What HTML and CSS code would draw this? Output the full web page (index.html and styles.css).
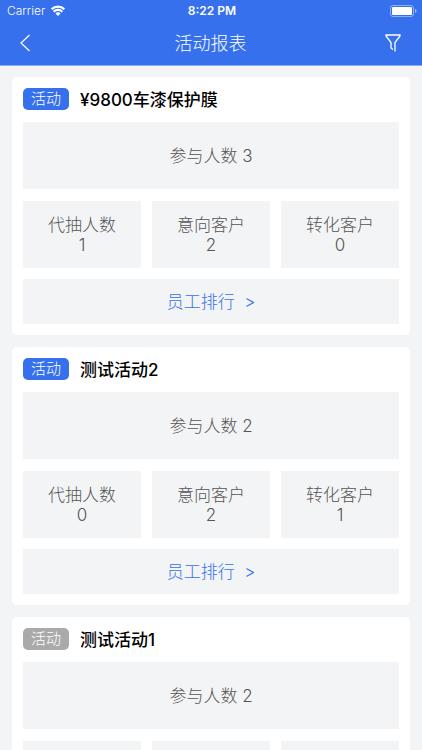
FILE: index.html
```html
<!DOCTYPE html>
<html lang="zh-CN">

<head>
    <meta charset="UTF-8">
    <meta name="viewport" content="width=device-width, initial-scale=1.0">
    <title>活动报表</title>
    <link rel="stylesheet" href="styles.css">
</head>

<body>
    <header class="header">
        <div class="status-bar">
            <div class="carrier">
                <span>Carrier</span>
                <svg class="wifi" width="14" height="11" viewBox="0 0 14 11" fill="none" stroke="#fff" stroke-width="2.2" aria-hidden="true">
                    <path d="M0.7 4.1a9 9 0 0 1 12.6 0" />
                    <path d="M2.7 6.700a6.100 6.100 0 0 1 8.600 0" />
                    <path d="M7 11L4.500 8.500a3.500 3.500 0 0 1 5 0z" fill="#fff" stroke="none" />
                </svg>
            </div>
            <span class="time">8:22 PM</span>
            <svg class="battery" width="27" height="12" viewBox="0 0 27 12" aria-hidden="true">
                <rect x="0.5" y="0.5" width="23" height="11" rx="2.5" fill="none" stroke="#fff" stroke-opacity="0.45" />
                <rect x="2" y="2" width="20" height="8" rx="1" fill="#fff" />
                <path d="M25 4v4c1-.4 1.5-1.1 1.5-2s-.5-1.6-1.5-2z" fill="#fff" fill-opacity="0.5" />
            </svg>
        </div>
        <nav class="nav-bar">
            <button class="nav-button" type="button" aria-label="返回">
                <svg width="10" height="18" viewBox="0 0 10 18" fill="none" stroke="#fff" stroke-width="1.2">
                    <path d="M9.5 1L1 9l8.500 8" />
                </svg>
            </button>
            <h1>活动报表</h1>
            <button class="nav-button right" type="button" aria-label="筛选">
                <svg width="16" height="18" viewBox="0 0 16 18" fill="none" stroke="#fff" stroke-width="1.3">
                    <path d="M10 17.500V8.500L15 2V1H1v1l5 6.500v5.500l2 1.500" />
                </svg>
            </button>
        </nav>
    </header>

    <main class="list">
        <section class="card">
            <div class="card-title">
                <span class="tag">活动</span>
                <h2>¥9800车漆保护膜</h2>
            </div>
            <div class="total">参与人数 3</div>
            <div class="stats">
                <div class="stat"><span>代抽人数</span><span>1</span></div>
                <div class="stat"><span>意向客户</span><span>2</span></div>
                <div class="stat"><span>转化客户</span><span>0</span></div>
            </div>
            <a class="ranking" href="#">员工排行&nbsp; &gt;</a>
        </section>

        <section class="card">
            <div class="card-title">
                <span class="tag">活动</span>
                <h2>测试活动2</h2>
            </div>
            <div class="total">参与人数 2</div>
            <div class="stats">
                <div class="stat"><span>代抽人数</span><span>0</span></div>
                <div class="stat"><span>意向客户</span><span>2</span></div>
                <div class="stat"><span>转化客户</span><span>1</span></div>
            </div>
            <a class="ranking" href="#">员工排行&nbsp; &gt;</a>
        </section>

        <section class="card">
            <div class="card-title">
                <span class="tag ended">活动</span>
                <h2>测试活动1</h2>
            </div>
            <div class="total">参与人数 2</div>
            <div class="stats">
                <div class="stat"></div>
                <div class="stat"></div>
                <div class="stat"></div>
            </div>
        </section>
    </main>
</body>

</html>
```
FILE: styles.css
```css
* {
    margin: 0;
    padding: 0;
    box-sizing: border-box;
}

body {
    display: flex;
    flex-direction: column;
    height: 100vh;
    font-family: Inter, "Noto Sans CJK SC", sans-serif;
    font-size: 17px;
    font-weight: 300;
    line-height: 20px;
    color: #555;
    background: #f3f4f6;
}

.header {
    flex-shrink: 0;
    color: #fff;
    background: #3670ed;
    border-bottom: 1px solid #86abf5;
}

.status-bar {
    display: grid;
    grid-template-columns: 1fr auto 1fr;
    align-items: center;
    height: 21px;
    padding: 0 5px 0 7px;
    font-size: 12px;
}

.carrier {
    display: flex;
    align-items: center;
    gap: 6px;
}

.time {
    font-weight: 600;
}

.battery {
    justify-self: end;
}

.nav-bar {
    display: grid;
    grid-template-columns: 1fr auto 1fr;
    align-items: center;
    height: 44px;
    padding: 0 21px 0 20px;
}

.nav-bar h1 {
    padding-top: 2px;
    font-size: 18px;
    font-weight: 300;
}

.nav-button {
    display: flex;
    justify-self: start;
    border: none;
    background: none;
    cursor: pointer;
}

.nav-button.right {
    justify-self: end;
}

.list {
    flex: 1;
    display: flex;
    flex-direction: column;
    gap: 12px;
    padding: 11px 12px;
    overflow-y: auto;
    scrollbar-width: none;
}

.card {
    flex-shrink: 0;
    padding: 11px;
    background: #fff;
    border-radius: 5px;
}

.card-title {
    display: flex;
    align-items: center;
    gap: 11px;
    margin-bottom: 12px;
}

.card-title h2 {
    padding-top: 2px;
    font-size: 17px;
    font-weight: 500;
    color: #000;
}

.tag {
    padding: 0 8px;
    border-radius: 5px;
    font-size: 15px;
    line-height: 22px;
    color: #fff;
    background: #3670ed;
}

.tag.ended {
    background: #aaa;
}

.total,
.stat,
.ranking {
    display: flex;
    align-items: center;
    justify-content: center;
    background: #f3f4f6;
}

.total {
    height: 67px;
}

.stats {
    display: grid;
    grid-template-columns: repeat(3, 1fr);
    gap: 11px;
    margin: 12px 0 11px;
}

.stat {
    flex-direction: column;
    height: 67px;
}

.ranking {
    height: 45px;
    color: #3670ed;
    text-decoration: none;
}
```
